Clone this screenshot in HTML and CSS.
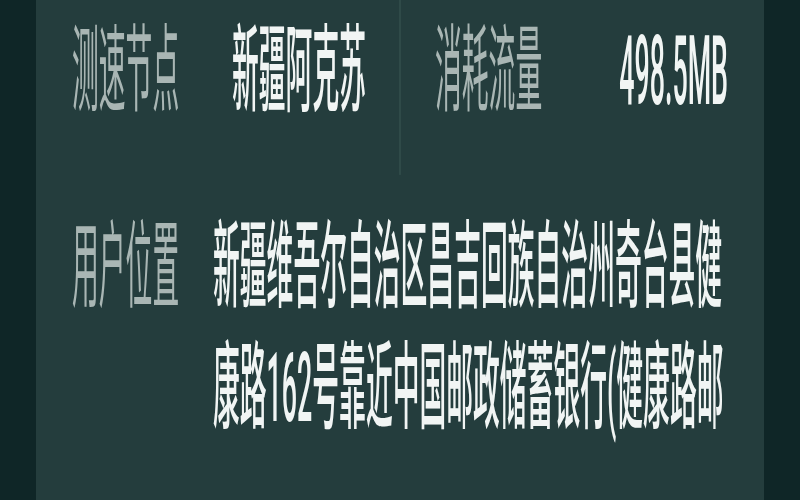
FILE: index.html
```html
<!DOCTYPE html>
<html lang="zh">
<head>
<meta charset="utf-8">
<link rel="stylesheet" href="styles.css">
</head>
<body>
<div class="panel">
  <div class="content">
    <div class="row-top">
      <div class="cell cell-left">
        <span class="label label-node">测速节点</span>
        <span class="value">新疆阿克苏</span>
      </div>
      <div class="divider"></div>
      <div class="cell cell-right">
        <span class="label">消耗流量</span>
        <span class="value value-num">498.5MB</span>
      </div>
    </div>
    <div class="row-loc">
      <span class="label label-loc">用户位置</span>
      <span class="value value-addr">新疆维吾尔自治区昌吉回族自治州奇台县健康路162号靠近中国邮政储蓄银行(健康路邮</span>
    </div>
  </div>
</div>
</body>
</html>
```

FILE: styles.css
```css
html, body {
  margin: 0;
  padding: 0;
}
body {
  width: 800px;
  height: 500px;
  overflow: hidden;
  background: #0f2627;
  font-family: Roboto, "Noto Sans CJK SC", "Noto Sans", sans-serif;
}
.panel {
  margin: 0 36px;
  height: 500px;
  background: #243d3d;
  overflow: hidden;
}
.content {
  transform: scaleY(3.57);
  transform-origin: 0 0;
  font-size: 26.8px;
  line-height: 34.6px;
}
.row-top {
  display: flex;
  height: 49px;
}
.cell {
  display: flex;
  align-items: flex-start;
  padding-top: 3.3px;
  box-sizing: border-box;
}
.cell-left {
  width: 363px;
  padding-left: 36px;
}
.cell-right {
  flex: 1;
  padding-left: 34px;
  padding-right: 36px;
}
.divider {
  width: 2px;
  background: #2f4a48;
}
.label {
  color: #a9b6b4;
  white-space: nowrap;
}
.label-node {
  width: 160px;
}
.value {
  color: #f1f5f4;
  white-space: nowrap;
  font-weight: 500;
}
.value-num {
  margin-left: auto;
  display: inline-block;
}
.row-loc {
  display: flex;
  padding-top: 8.6px;
  padding-left: 36px;
}
.label-loc {
  width: 141px;
  flex: none;
}
.value-addr {
  width: 512px;
  white-space: normal;
  word-break: break-all;
}
```
